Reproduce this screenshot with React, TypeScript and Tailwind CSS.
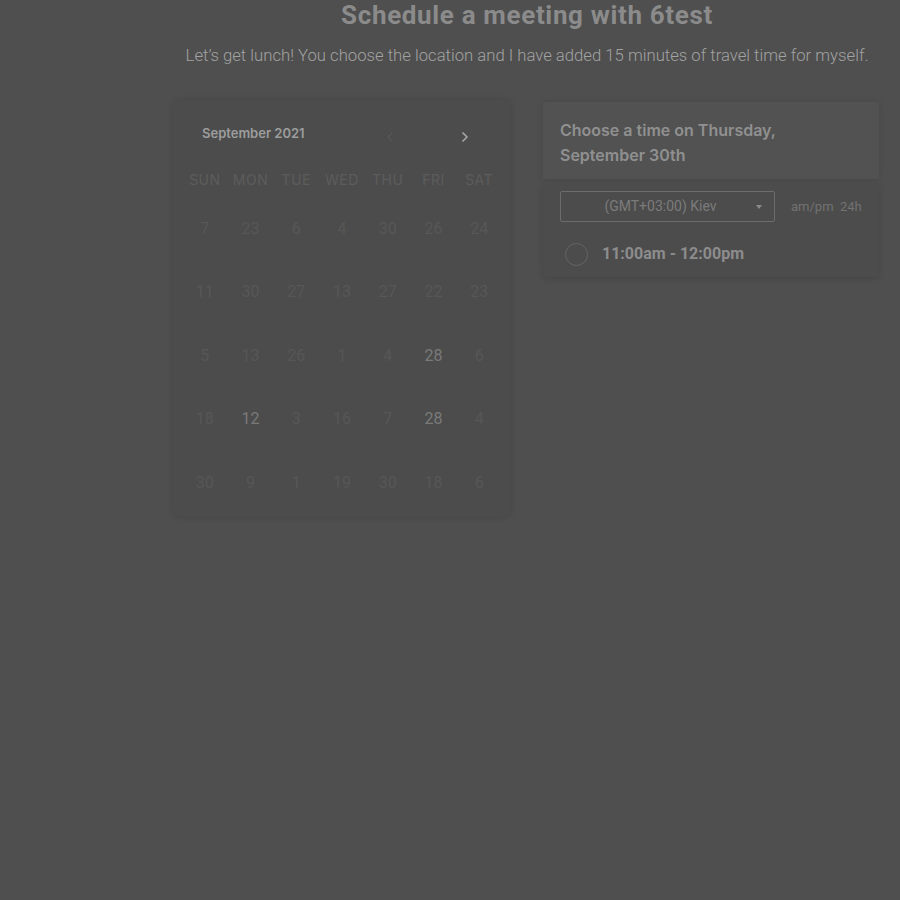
import { ChevronLeft, ChevronRight } from "lucide-react";

const weekdays = ["SUN", "MON", "TUE", "WED", "THU", "FRI", "SAT"];

// numbers as they show in the (still loading) grid
const rows: { n: string; hi?: boolean }[][] = [
  [{ n: "7" }, { n: "23" }, { n: "6" }, { n: "4" }, { n: "30" }, { n: "26" }, { n: "24" }],
  [{ n: "11" }, { n: "30" }, { n: "27" }, { n: "13" }, { n: "27" }, { n: "22" }, { n: "23" }],
  [{ n: "5" }, { n: "13" }, { n: "26" }, { n: "1" }, { n: "4" }, { n: "28", hi: true }, { n: "6" }],
  [{ n: "18" }, { n: "12", hi: true }, { n: "3" }, { n: "16" }, { n: "7" }, { n: "28", hi: true }, { n: "4" }],
  [{ n: "30" }, { n: "9" }, { n: "1" }, { n: "19" }, { n: "30" }, { n: "18" }, { n: "6" }],
];

export default function App() {
  return (
    <div className="min-h-[900px] w-full bg-[#4f4f4f] font-['Roboto',sans-serif]">
      <div className="flex flex-col items-center pl-[154px]">
        <h1 className="text-[26px] font-bold leading-[30px] tracking-[0.65px] text-[#8b8b8b]">Schedule a meeting with 6test</h1>
        <p className="mt-[15px] text-[16.7px] font-light leading-[22px] text-[#a2a2a2]">
          Let’s get lunch! You choose the location and I have added 15 minutes of travel time for myself.
        </p>
      </div>

      <div className="mt-[33px] flex gap-[32px] pl-[173px] font-['Inter',sans-serif]">
        {/* calendar */}
        <div className="h-[417px] w-[338px] rounded-[6px] bg-[#4c4c4c] shadow-[0_0_6px_rgba(0,0,0,0.12)] pt-[22px] px-[9px]">
          <div className="flex h-[24px] items-center pl-[20px]">
            <span className="text-[13px] font-semibold text-[#9d9d9d]">September 2021</span>
            <ChevronLeft size={16} strokeWidth={1.5} className="ml-[77px] mt-[6px] text-[#5c5c5c]" />
            <ChevronRight size={16} strokeWidth={2.6} className="ml-[59px] mt-[6px] text-[#a6a6a6]" />
          </div>
          <div className="mt-[25px] grid grid-cols-7">
            {weekdays.map((d) => (
              <div key={d} className="text-center text-[14px] leading-[17px] tracking-[0.5px] text-[#5c5c5c]">
                {d}
              </div>
            ))}
          </div>
          <div className="mt-[9px]">
            {rows.map((r, i) => (
              <div key={i} className="grid h-[63.5px] grid-cols-7 items-center">
                {r.map((c, j) => (
                  <div
                    key={j}
                    className={
                      "text-center font-['Roboto',sans-serif] text-[16px] " +
                      (c.hi ? "text-[#7a7a7a]" : "text-[#575757]")
                    }
                  >
                    {c.n}
                  </div>
                ))}
              </div>
            ))}
          </div>
        </div>

        {/* time picker */}
        <div className="w-[336px] pt-[2px]">
          <div className="bg-[#525252] px-[17px] pt-[16px] pb-[11px] shadow-[0_0_6px_rgba(0,0,0,0.1)]">
            <p className="text-[16px] font-semibold leading-[25px] text-[#909090]">
              Choose a time on Thursday,
              <br />
              September 30th
            </p>
          </div>
          <div className="mt-[3px] h-[95px] rounded-b-[4px] bg-[#4c4c4c] px-[17px] pt-[9px] shadow-[0_2px_6px_rgba(0,0,0,0.12)]">
            <div className="flex items-center">
              <div className="relative flex h-[31px] w-[215px] items-center justify-center rounded-[2px] border border-[#6c6c6c] font-['Roboto',sans-serif] text-[14px] text-[#7b7b7b]">
                <span className="-ml-[14px]">(GMT+03:00) Kiev</span>
                <span className="absolute right-[12px] top-[13px] h-0 w-0 border-x-[3px] border-t-[4px] border-x-transparent border-t-[#8a8a8a]" />
              </div>
              <span className="ml-[16px] font-['Roboto',sans-serif] text-[13px] text-[#727272]">am/pm&nbsp;&nbsp;24h</span>
            </div>
            <div className="mt-[20px] flex items-center pl-[5px]">
              <span className="h-[23px] w-[23px] rounded-full border border-[#656565]" />
              <span className="ml-[14px] font-['Roboto',sans-serif] text-[16px] font-bold text-[#8c8c8c]">11:00am - 12:00pm</span>
            </div>
          </div>
        </div>
      </div>
    </div>
  );
}
